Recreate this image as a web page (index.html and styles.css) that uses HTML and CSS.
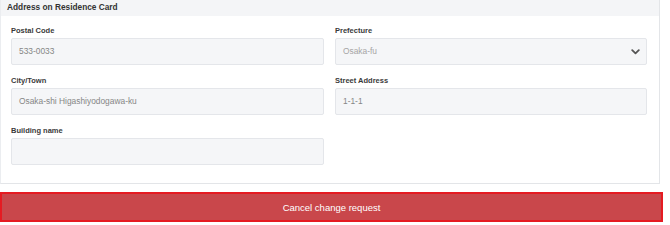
FILE: index.html
```html
<!DOCTYPE html>
<html>
<head>
<meta charset="utf-8">
<link rel="stylesheet" href="styles.css">
</head>
<body>
<div class="card">
  <div class="card-header">Address on Residence Card</div>
  <div class="card-body">
    <div class="field">
      <div class="label">Postal Code</div>
      <div class="input">533-0033</div>
    </div>
    <div class="field">
      <div class="label">Prefecture</div>
      <div class="input select">
        <span class="muted">Osaka-fu</span>
        <svg class="chev" width="9" height="6" viewBox="0 0 9 6"><path d="M1.2 1.2 L4.5 4.4 L7.8 1.2" fill="none" stroke="#555" stroke-width="1.8" stroke-linecap="round" stroke-linejoin="round"/></svg>
      </div>
    </div>
    <div class="field">
      <div class="label">City/Town</div>
      <div class="input">Osaka-shi Higashiyodogawa-ku</div>
    </div>
    <div class="field">
      <div class="label">Street Address</div>
      <div class="input">1-1-1</div>
    </div>
    <div class="field">
      <div class="label">Building name</div>
      <div class="input"></div>
    </div>
  </div>
</div>
<button class="cancel-btn">Cancel change request</button>
</body>
</html>
```

FILE: styles.css
```css
html, body {
  margin: 0;
  padding: 0;
  background: #ffffff;
  font-family: "Liberation Sans", Arial, sans-serif;
}

.card {
  box-sizing: border-box;
  width: 660px;
  border: 1px solid #e3e5e8;
  border-top: none;
  border-left-color: #ebedf0;
}

.card-header {
  height: 16px;
  line-height: 15px;
  background: #f4f5f7;
  padding-left: 6px;
  font-size: 8.3px;
  font-weight: bold;
  color: #333;
}

.card-body {
  display: grid;
  grid-template-columns: 313px 312px;
  column-gap: 11px;
  row-gap: 11px;
  padding: 10px 12px 18px 10px;
}

.label {
  height: 10px;
  line-height: 10px;
  font-size: 7.5px;
  font-weight: bold;
  color: #3a3a3a;
  margin-bottom: 2px;
}

.input {
  height: 27px;
  box-sizing: border-box;
  background: #f5f6f8;
  border: 1px solid #e4e6ea;
  border-radius: 2px;
  padding-left: 7px;
  font-size: 8.4px;
  line-height: 25px;
  color: #868686;
}

.select {
  display: flex;
  align-items: center;
  justify-content: space-between;
  padding-right: 6px;
}

.muted {
  color: #a5a5a5;
}

.chev {
  display: block;
}

.cancel-btn {
  display: block;
  margin-top: 8px;
  width: 663px;
  height: 30px;
  box-sizing: border-box;
  background: #c9474b;
  border: 2px solid #e51b22;
  color: #ffffff;
  font-family: "Liberation Sans", Arial, sans-serif;
  font-size: 9.5px;
  text-align: center;
  padding: 0;
}
```
